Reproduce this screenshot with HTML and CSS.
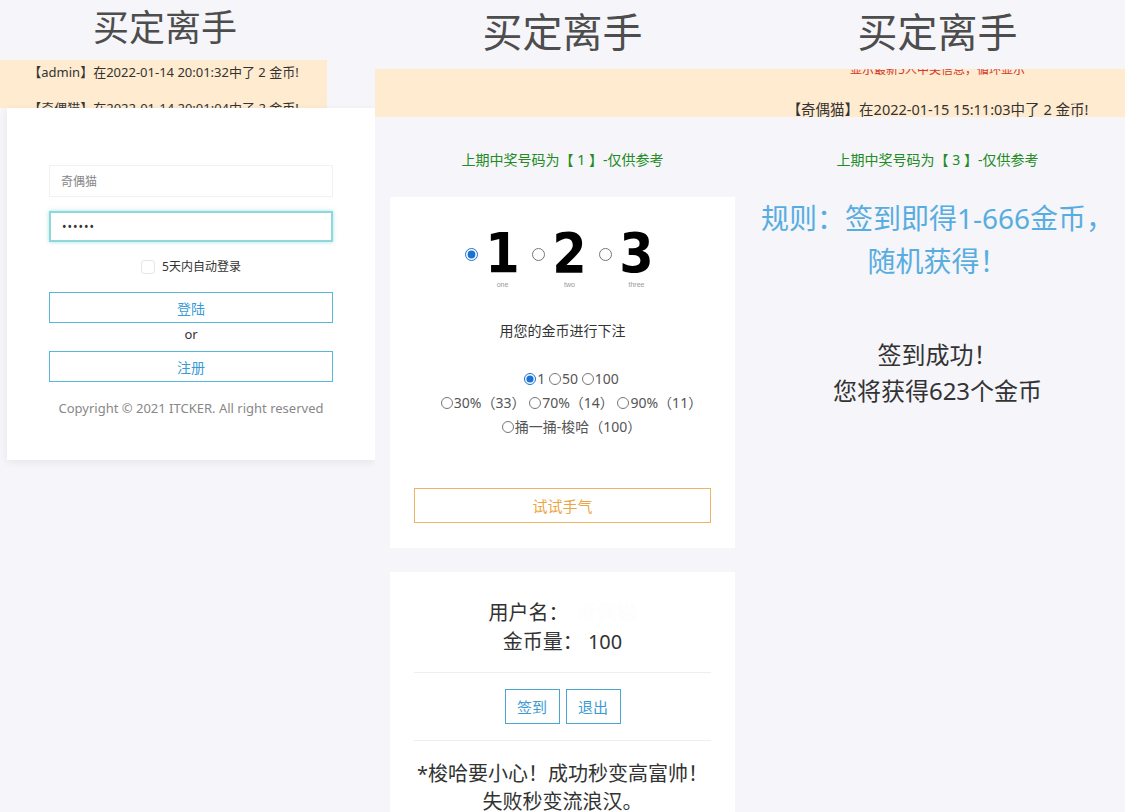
FILE: index.html
```html
<!DOCTYPE html>
<html lang="zh-CN">
  <head>
    <meta charset="UTF-8" />
    <meta name="viewport" content="width=device-width, initial-scale=1.0" />
    <title>买定离手</title>
    <link rel="stylesheet" href="styles.css">
  </head>
  <body>
    <div class="board">
      <!-- 登录页 -->
      <section class="screen screen-login">
        <h1 class="title">买定离手</h1>
        <div class="notice">
          <ul class="notice-list">
            <li>【admin】在2022-01-14 20:01:32中了 2 金币!</li>
            <li>【奇偶猫】在2022-01-14 20:01:04中了 2 金币!</li>
          </ul>
        </div>
        <form class="login-card">
          <input class="field" type="text" placeholder="奇偶猫">
          <input class="field field-focus" type="password" value="123456">
          <label class="remember"><span class="check"></span>5天内自动登录</label>
          <button class="btn-line" type="button">登陆</button>
          <p class="or">or</p>
          <button class="btn-line" type="button">注册</button>
          <p class="copyright">Copyright © 2021 ITCKER. All right reserved</p>
        </form>
      </section>

      <!-- 下注页 -->
      <section class="screen">
        <h1 class="title">买定离手</h1>
        <div class="notice"></div>
        <p class="last-num">上期中奖号码为【 1 】-仅供参考</p>
        <div class="card bet-card">
          <div class="pick">
            <label class="pick-item"><input type="radio" name="num" checked><span class="digit"><b>1</b><small>one</small></span></label>
            <label class="pick-item"><input type="radio" name="num"><span class="digit"><b>2</b><small>two</small></span></label>
            <label class="pick-item"><input type="radio" name="num"><span class="digit"><b>3</b><small>three</small></span></label>
          </div>
          <p class="tip">用您的金币进行下注</p>
          <div class="stakes">
            <p><label><input type="radio" name="coin" checked>1</label> <label><input type="radio" name="coin">50</label> <label><input type="radio" name="coin">100</label></p>
            <p><label><input type="radio" name="coin">30%（33）</label> <label><input type="radio" name="coin">70%（14）</label> <label><input type="radio" name="coin">90%（11）</label></p>
            <p><label><input type="radio" name="coin">捅一捅-梭哈（100）</label></p>
          </div>
          <button class="btn-try" type="button">试试手气</button>
        </div>
        <div class="card user-card">
          <p class="info">用户名：<span class="uname">奇偶猫</span></p>
          <p class="info">金币量： 100</p>
          <div class="divider"></div>
          <div class="actions">
            <button class="btn-sm" type="button">签到</button>
            <button class="btn-sm" type="button">退出</button>
          </div>
          <div class="divider"></div>
          <p class="warn">*梭哈要小心！成功秒变高富帅！<br>失败秒变流浪汉。</p>
        </div>
      </section>

      <!-- 签到页 -->
      <section class="screen">
        <h1 class="title">买定离手</h1>
        <div class="notice">
          <div class="notice-scroll">
            <p class="notice-head">显示最新5人中奖信息，循环显示</p>
            <p class="notice-item">【奇偶猫】在2022-01-15 15:11:03中了 2 金币!</p>
          </div>
        </div>
        <p class="last-num">上期中奖号码为【 3 】-仅供参考</p>
        <p class="rule">规则：签到即得1-666金币，<br>随机获得！</p>
        <p class="result">签到成功！<br>您将获得623个金币</p>
      </section>
    </div>
  </body>
</html>
```

FILE: styles.css
```css
* {
  padding: 0;
  margin: 0;
  box-sizing: border-box;
}
body {
  background: #f5f5fa;
  font-family: "Noto Sans", "Noto Sans CJK SC", sans-serif;
  color: #333;
  overflow: hidden;
}
ul,
li {
  list-style: none;
}
.board {
  display: grid;
  grid-template-columns: 375px 375px 375px;
  height: 812px;
}
.screen {
  overflow: hidden;
  text-align: center;
}
.title {
  font-size: 40px;
  line-height: 48px;
  font-weight: normal;
  color: #4d4d4d;
  margin: 8px 0 13px;
}
.notice {
  height: 48px;
  background: #ffebcf;
  overflow: hidden;
  font-size: 13px;
  color: #333;
}
.last-num {
  margin: 33px 0 27px;
  font-size: 14px;
  line-height: 20px;
  color: #228b22;
}

/* 登录 */
.screen-login .title {
  width: 330px;
  font-size: 36px;
  line-height: 44px;
  margin: 6px 0 10px;
}
.screen-login .notice {
  width: 327px;
}
.notice-list {
  margin-top: -3.5px;
  line-height: 31px;
}
.notice-list li + li {
  margin-top: 5px;
}
.login-card {
  width: 368px;
  margin-left: 7px;
  padding: 57px 42px 42px;
  background: #fff;
  box-shadow: 0 2px 8px rgba(0, 0, 0, 0.07);
}
.field {
  display: block;
  width: 100%;
  height: 32px;
  padding: 0 11px;
  border: 1px solid #f1f1f1;
  font-family: inherit;
  font-size: 12px;
  color: #333;
  outline: none;
}
.field::placeholder {
  color: #888;
}
.field-focus {
  height: 31px;
  margin-top: 14px;
  border: 2px solid #8fd8da;
  box-shadow: 0 0 4px rgba(102, 204, 210, 0.6);
  letter-spacing: 1px;
}
.remember {
  display: flex;
  justify-content: center;
  align-items: center;
  margin-top: 15px;
  font-size: 12px;
  line-height: 20px;
}
.check {
  width: 14px;
  height: 14px;
  margin-right: 7px;
  border: 1px solid #e6e6e6;
  border-radius: 3px;
}
.btn-line {
  display: block;
  width: 100%;
  height: 31px;
  margin-top: 15px;
  border: 1px solid #5ab7dc;
  background: #fff;
  color: #3a9ad6;
  font-family: inherit;
  font-size: 14px;
}
.or {
  margin: 2px 0 -7px;
  font-size: 13px;
  line-height: 18px;
}
.copyright {
  margin-top: 16px;
  font-size: 13px;
  line-height: 20px;
  color: #888;
}

/* 下注 */
.card {
  background: #fff;
  margin: 0 15px 24px;
}
.bet-card {
  padding: 29px 24px 25px;
}
.pick {
  display: flex;
  justify-content: center;
  padding-left: 6px;
}
.pick-item {
  display: flex;
  align-items: flex-start;
  margin-right: 14px;
}
.pick-item input {
  width: 13px;
  height: 13px;
  margin: 22px 9px 0 0;
  accent-color: #1a73d0;
}
.digit {
  display: flex;
  flex-direction: column;
  align-items: center;
  width: 31px;
}
.digit b {
  font-family: "DejaVu Sans Condensed", "DejaVu Sans", sans-serif;
  font-stretch: condensed;
  font-weight: bold;
  font-size: 55px;
  line-height: 54px;
  color: #000;
}
.digit small {
  margin-top: 2px;
  font-family: "Liberation Sans", sans-serif;
  font-size: 7px;
  line-height: 6px;
  color: #999;
}
.tip {
  margin-top: 33px;
  font-size: 14px;
  line-height: 20px;
}
.stakes {
  margin-top: 26px;
  padding-left: 18px;
  font-size: 14px;
  line-height: 24px;
  color: #555;
}
.stakes input {
  width: 12px;
  height: 12px;
  margin: 0 1px 0 0;
  vertical-align: -1px;
  accent-color: #1a73d0;
}
.btn-try {
  display: block;
  width: 100%;
  height: 35px;
  margin-top: 49px;
  border: 1px solid #ebb662;
  background: #fff;
  color: #eda544;
  font-family: inherit;
  font-size: 15px;
}
.user-card {
  padding: 26px 24px 0;
  height: 260px;
}
.info {
  font-size: 20px;
  line-height: 29px;
}
.uname {
  margin-left: 8px;
  color: #fdfdfd;
}
.divider {
  border-top: 1px solid #eee;
  margin: 16px 0;
}
.actions {
  display: flex;
  justify-content: center;
  gap: 6px;
}
.btn-sm {
  width: 55px;
  height: 35px;
  border: 1px solid #4aa6cf;
  background: #fff;
  color: #3b9bd0;
  font-family: inherit;
  font-size: 15px;
}
.warn {
  margin-top: 19px;
  font-size: 20px;
  line-height: 28px;
}

/* 签到 */
.notice-scroll {
  margin-top: -9px;
}
.notice-head {
  font-size: 12px;
  line-height: 20px;
  color: #d0392b;
}
.notice-item {
  margin-top: 16px;
  font-size: 14.5px;
  line-height: 26px;
}
.rule {
  margin-top: 27px;
  font-size: 28px;
  line-height: 43px;
  color: #58ade0;
}
.result {
  margin-top: 54px;
  font-size: 24px;
  line-height: 36px;
  color: #333;
}
```
